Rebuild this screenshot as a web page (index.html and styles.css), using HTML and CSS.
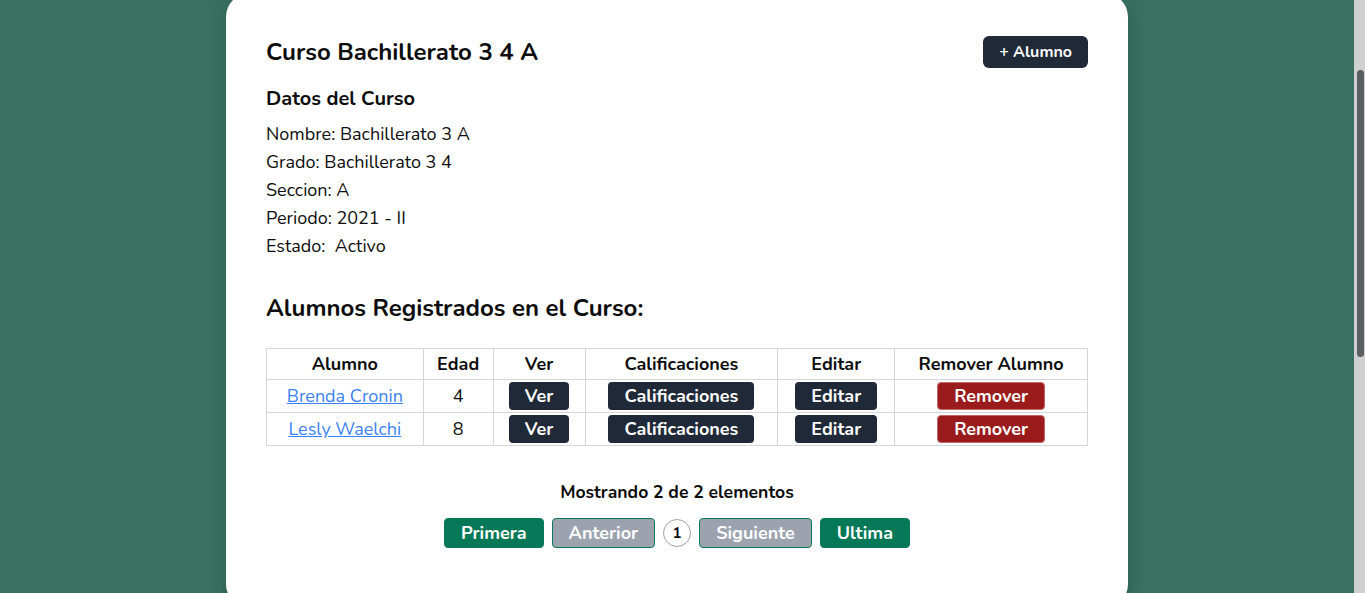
FILE: index.html
```html
<!DOCTYPE html>
<html lang="es">
<head>
<meta charset="utf-8">
<title>Curso Bachillerato 3 4 A</title>
<link rel="stylesheet" href="styles.css">
</head>
<body>
<main class="page">
  <section class="card">
    <header class="card-header">
      <h1 class="title">Curso Bachillerato 3 4 A</h1>
      <button class="btn btn-dark btn-small">+ Alumno</button>
    </header>

    <h2 class="subtitle">Datos del Curso</h2>
    <ul class="details">
      <li>Nombre: Bachillerato 3 A</li>
      <li>Grado: Bachillerato 3 4</li>
      <li>Seccion: A</li>
      <li>Periodo: 2021 - II</li>
      <li>Estado:&nbsp; Activo</li>
    </ul>

    <h2 class="section-title">Alumnos Registrados en el Curso:</h2>

    <table class="students">
      <thead>
        <tr>
          <th class="c-name">Alumno</th>
          <th class="c-age">Edad</th>
          <th class="c-see">Ver</th>
          <th class="c-grades">Calificaciones</th>
          <th class="c-edit">Editar</th>
          <th class="c-remove">Remover Alumno</th>
        </tr>
      </thead>
      <tbody>
        <tr>
          <td><a href="#" class="link">Brenda Cronin</a></td>
          <td>4</td>
          <td><button class="btn btn-dark">Ver</button></td>
          <td><button class="btn btn-dark">Calificaciones</button></td>
          <td><button class="btn btn-dark">Editar</button></td>
          <td><button class="btn btn-red">Remover</button></td>
        </tr>
        <tr>
          <td><a href="#" class="link">Lesly Waelchi</a></td>
          <td>8</td>
          <td><button class="btn btn-dark">Ver</button></td>
          <td><button class="btn btn-dark">Calificaciones</button></td>
          <td><button class="btn btn-dark">Editar</button></td>
          <td><button class="btn btn-red">Remover</button></td>
        </tr>
      </tbody>
    </table>

    <p class="showing">Mostrando 2 de 2 elementos</p>
    <nav class="pager">
      <button class="pg pg-green">Primera</button>
      <button class="pg pg-grey">Anterior</button>
      <span class="pg-num">1</span>
      <button class="pg pg-grey">Siguiente</button>
      <button class="pg pg-green">Ultima</button>
    </nav>
  </section>
</main>
<div class="scrollbar" aria-hidden="true"><div class="scrollbar-thumb"></div></div>
<script src="script.js"></script>
</body>
</html>
```

FILE: styles.css
```css
* {
  box-sizing: border-box;
}

body {
  margin: 0;
  background: #387160;
  font-family: "Nunito", "Lato", "Noto Sans", sans-serif;
  color: #0d0d0d;
}

.page {
  padding: 138px 11px 472px 0;
  display: flex;
  justify-content: center;
}

/* window scrollbar as seen in the screenshot */
.scrollbar {
  position: fixed;
  top: 0;
  right: 0;
  width: 11px;
  height: 100vh;
  background: #d0d0d0;
}

.scrollbar-thumb {
  position: absolute;
  top: 70px;
  left: 3px;
  width: 7px;
  height: 287px;
  border-radius: 4px;
  background: #595e5e;
}

.card {
  width: 902px;
  background: #fff;
  border-radius: 24px;
  padding: 43px 40px 60px;
  box-shadow: 0 4px 18px rgba(0, 0, 0, 0.18);
}

.card-header {
  display: flex;
  justify-content: space-between;
  align-items: center;
  margin-bottom: 17px;
}

.title {
  margin: 0;
  font-size: 24px;
  line-height: 32px;
  font-weight: 700;
}

.btn {
  font-family: inherit;
  border: 0;
  color: #fff;
  font-weight: 700;
  cursor: pointer;
}

.btn-dark {
  background: #1f2937;
}

.btn-small {
  height: 32px;
  padding: 0 16px;
  font-size: 16px;
  border-radius: 6px;
}

.subtitle {
  margin: 0 0 7px;
  font-size: 20px;
  line-height: 28px;
  font-weight: 700;
}

.details {
  list-style: none;
  margin: 0;
  padding: 0;
  font-size: 18px;
  line-height: 28px;
}

.section-title {
  margin: 32px 0 24px;
  font-size: 24px;
  line-height: 32px;
  font-weight: 700;
}

.students {
  width: 100%;
  border-collapse: collapse;
  font-size: 18px;
  text-align: center;
}

.students th,
.students td {
  border: 1px solid #d4d6dc;
  padding: 0;
}

.students th {
  height: 31px;
  font-weight: 700;
}

.students td {
  height: 33px;
}

.c-name { width: 157px; }
.c-age { width: 70px; }
.c-see { width: 92px; }
.c-grades { width: 193px; }
.c-edit { width: 117px; }
.c-remove { width: 193px; }

.link {
  color: #3b82f6;
  text-decoration: underline;
}

.students .btn {
  height: 28px;
  padding: 0 16px;
  font-size: 18px;
  border-radius: 4px;
  vertical-align: middle;
}

.btn-red {
  background: #991b1b;
  border: 1px solid #c4686b;
}

.showing {
  margin: 32px 0 12px;
  text-align: center;
  font-size: 17.6px;
  line-height: 28px;
  font-weight: 700;
}

.pager {
  display: flex;
  justify-content: center;
  align-items: center;
  gap: 8px;
}

.pg {
  height: 30px;
  padding: 0 16px;
  font-family: inherit;
  font-size: 18px;
  font-weight: 700;
  color: #fff;
  border-radius: 4px;
  border: 1px solid #0b7a59;
}

.pg-green {
  background: #047857;
}

.pg-grey {
  background: #9ca3af;
}

.pg-num {
  width: 28px;
  height: 28px;
  border-radius: 50%;
  border: 1px solid #9ca3af;
  display: flex;
  align-items: center;
  justify-content: center;
  font-size: 15px;
  font-weight: 700;
}
```

FILE: script.js
```js
window.scrollTo(0, 145);
```
